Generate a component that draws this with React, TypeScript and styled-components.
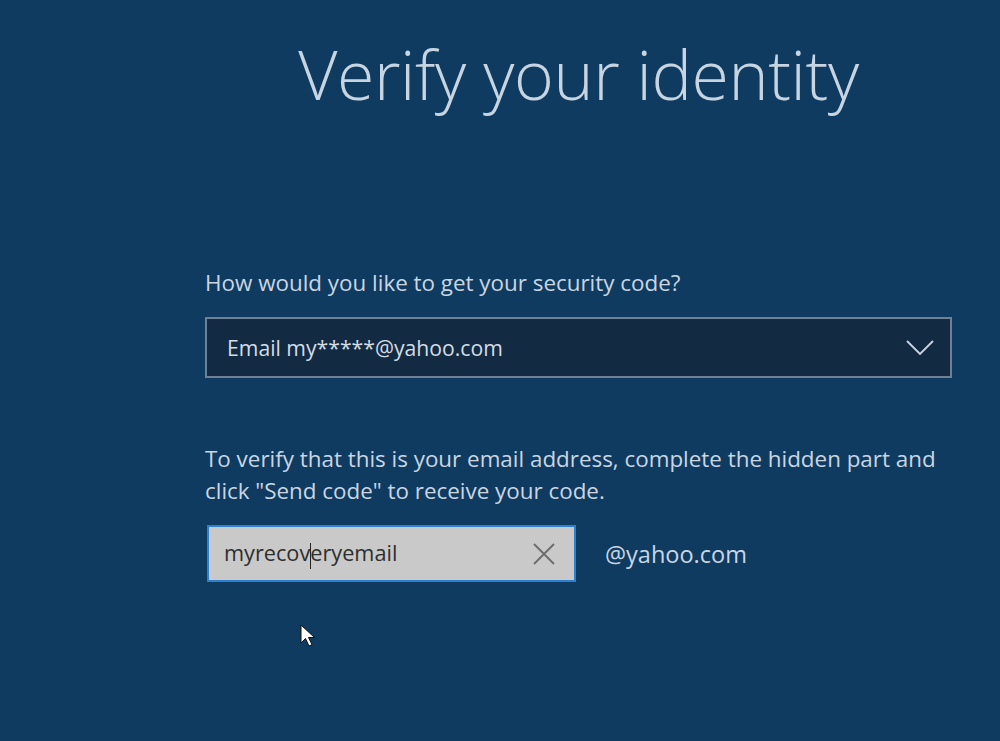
import styled, { createGlobalStyle } from 'styled-components'

const Global = createGlobalStyle`
  html, body {
    margin: 0;
    padding: 0;
    background: #0f3b61;
  }
  body {
    font-family: 'Open Sans', 'Noto Sans', sans-serif;
  }
`

const Screen = styled.div`
  position: relative;
  width: 1000px;
  height: 741px;
  overflow: hidden;
  background: #0f3b61;
  color: #c9d6e2;
`

const Column = styled.div`
  width: 747px;
  margin-left: 205px;
  display: flex;
  flex-direction: column;
`

const Title = styled.h1`
  margin: 30px 0 0;
  font-family: 'Open Sans', sans-serif;
  font-weight: 300;
  font-size: 68px;
  line-height: 88px;
  text-align: center;
  color: #c7d4e1;
  letter-spacing: -0.4px;
`

const Label = styled.p<{ $top: number }>`
  margin: ${({ $top }) => $top}px 0 0;
  font-size: 22.4px;
  line-height: 32px;
  color: #c9d6e2;
`

const Select = styled.div`
  margin-top: 18px;
  height: 61px;
  box-sizing: border-box;
  border: 2px solid #6f8295;
  background: #132b42;
  display: flex;
  align-items: center;
  justify-content: space-between;
  padding: 0 16px 0 20px;
  font-size: 21.2px;
  color: #d3dde6;
`

const Chevron = styled.svg`
  width: 28px;
  height: 16px;
`

const InputRow = styled.div`
  margin-top: 18px;
  display: flex;
  align-items: center;
  gap: 29px;
`

const TextBox = styled.div`
  width: 369px;
  height: 57px;
  margin-left: 2px;
  box-sizing: border-box;
  border: 2px solid #2d7fcf;
  background: #c9c9c9;
  display: flex;
  align-items: center;
  justify-content: space-between;
  padding: 0 18px 0 15px;
  font-size: 21.7px;
  color: #2e2e2e;
`

const Caret = styled.span`
  display: inline-block;
  width: 1px;
  height: 26px;
  background: #222;
  vertical-align: middle;
  margin: 0 -1px 0 0;
`

const ClearIcon = styled.svg`
  width: 24px;
  height: 24px;
`

const Domain = styled.span`
  font-size: 23.5px;
  color: #c9d6e2;
`

const Pointer = styled.svg`
  position: absolute;
  left: 300px;
  top: 624px;
  width: 17px;
  height: 24px;
`

export default function App() {
  return (
    <Screen>
      <Global />
      <Column>
        <Title>Verify your identity</Title>
        <Label $top={149}>How would you like to get your security code?</Label>
        <Select>
          <span>Email my*****@yahoo.com</span>
          <Chevron viewBox="0 0 28 16" fill="none" stroke="#c9d6e2" strokeWidth="1.8">
            <path d="M1 1 L14 14 L27 1" />
          </Chevron>
        </Select>
        <Label $top={65}>
          To verify that this is your email address, complete the hidden part and click "Send code" to
          receive your code.
        </Label>
        <InputRow>
          <TextBox>
            <span>
              myrecov
              <Caret />
              eryemail
            </span>
            <ClearIcon viewBox="0 0 24 24" fill="none" stroke="#6b6b6b" strokeWidth="1.8">
              <path d="M2 2 L22 22 M22 2 L2 22" />
            </ClearIcon>
          </TextBox>
          <Domain>@yahoo.com</Domain>
        </InputRow>
      </Column>
      <Pointer viewBox="0 0 17 24">
        <path d="M1 1 L1 19 L5.5 14.5 L9 22 L12 20.6 L8.5 13.5 L14.5 13.5 Z" fill="#fff" stroke="#111" strokeWidth="1" />
      </Pointer>
    </Screen>
  )
}
